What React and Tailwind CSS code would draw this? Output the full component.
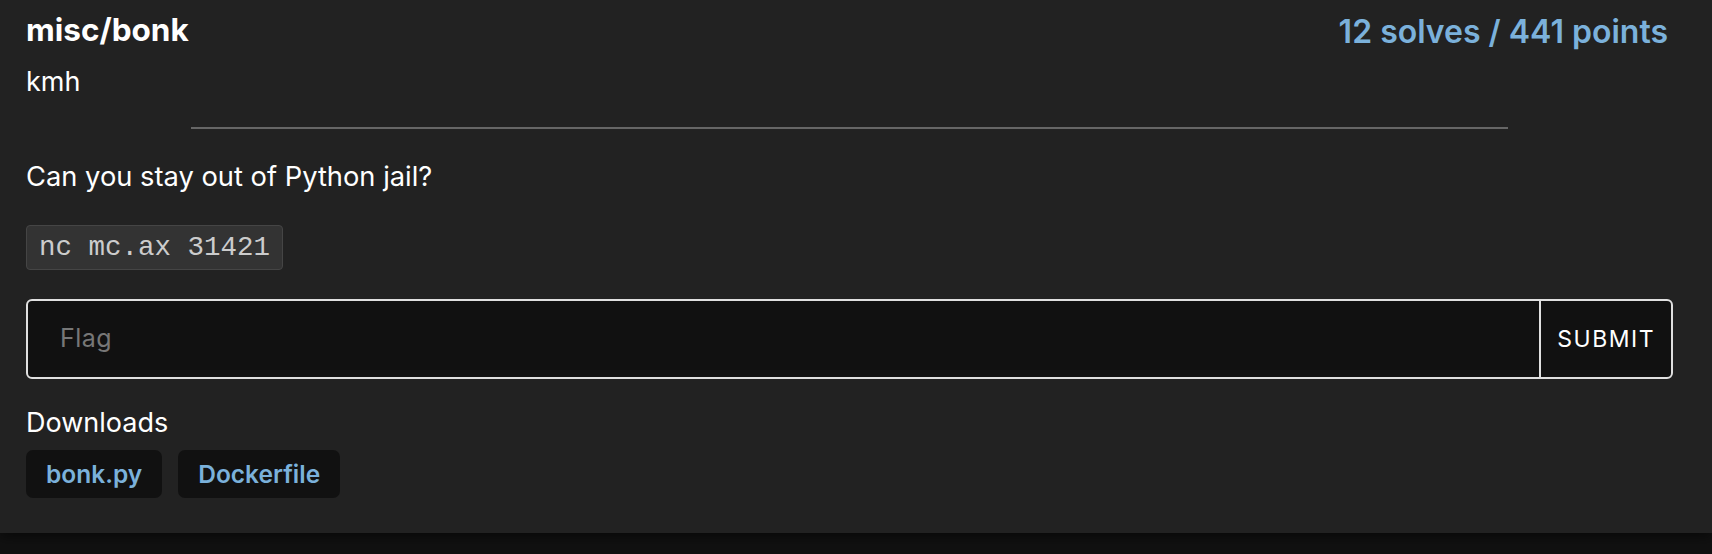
export default function App() {
  return (
    <div className="min-h-[554px] bg-[#111111]" style={{ fontFamily: "Inter, 'Noto Sans', sans-serif" }}>
      <div className="bg-[#222222] pl-[26px] pr-[39px] pt-[10px] pb-[35px] text-white shadow-[0_4px_12px_rgba(0,0,0,0.5)]">
        <div className="flex items-start justify-between">
          <div>
            <h1 className="text-[31.5px] font-bold leading-[40px]">misc/bonk</h1>
            <p className="mt-[12px] text-[27px] leading-[40px]">kmh</p>
          </div>
          <p className="mr-[5px] text-[32px] font-semibold leading-[44px] text-[#7bb1db]">
            12 solves / 441 points
          </p>
        </div>
        <hr className="mx-auto mt-[25px] w-4/5 border-t-[2px] border-[#666666]" />
        <p className="mt-[30px] text-[27.3px] leading-[36px]">Can you stay out of Python jail?</p>
        <div className="mt-[30px] inline-block rounded-[4px] border border-[#454545] bg-[#333333] px-[12px] py-[4px] text-[27.5px] leading-[35px] text-[#cccccc]" style={{ fontFamily: "'Liberation Mono', monospace" }}>
          nc mc.ax 31421
        </div>
        <div className="mt-[29px] flex h-[80px] overflow-hidden rounded-[6px] border-2 border-[#e0e0e0] bg-[#111111]">
          <input
            placeholder="Flag"
            className="min-w-0 flex-1 bg-transparent px-[32px] text-[25px] tracking-[0.5px] text-white outline-none placeholder:text-[#777777]"
          />
          <button className="border-l-2 border-[#e0e0e0] px-[16px] text-[23px] tracking-[1.5px] text-white">
            SUBMIT
          </button>
        </div>
        <p className="mt-[26px] text-[27px] leading-[36px]">Downloads</p>
        <div className="mt-[9px] flex gap-[16px]">
          <a className="flex h-[48px] items-center rounded-[7px] bg-[#111111] px-[20px] text-[24.5px] font-semibold text-[#7bb1db]">bonk.py</a>
          <a className="flex h-[48px] items-center rounded-[7px] bg-[#111111] px-[20px] text-[24.5px] font-semibold text-[#7bb1db]">Dockerfile</a>
        </div>
      </div>
    </div>
  );
}
